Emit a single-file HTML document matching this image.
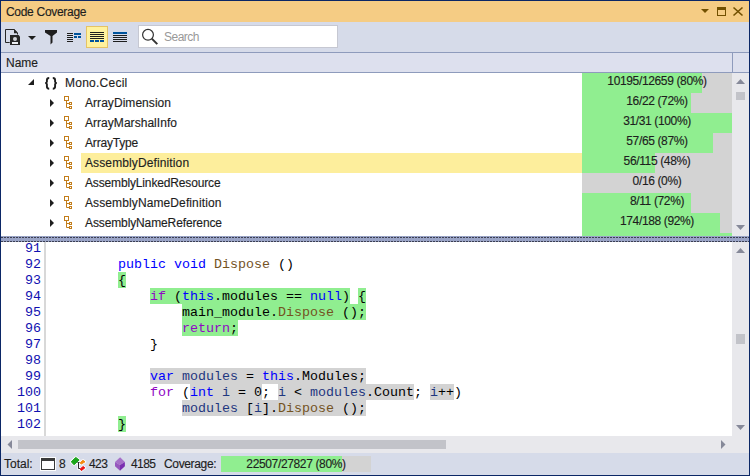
<!DOCTYPE html><html><head><meta charset="utf-8"><style>
*{margin:0;padding:0;box-sizing:border-box}
html,body{width:750px;height:476px;overflow:hidden;background:#fff}
body{position:relative;font-family:"Liberation Sans",sans-serif;font-size:12px;color:#1e1e1e}
div,span.t{position:absolute}
.t{white-space:pre;line-height:14px;height:14px;-webkit-text-stroke:0.15px currentColor}
.bar{background:#d3d3d3}
.grn{background:#90ee90}
.code{font-family:"Liberation Mono",monospace;font-size:13.333px;white-space:pre;line-height:16px;height:16px;color:#000}
.g{background:#90ee90}
.y{background:#d3d3d3}
.kw{color:#0000ff}
.ck{color:#8f08c4}
.mt{color:#74531f}
.lv{color:#1f377f}
svg{position:absolute;left:0;top:0}
</style></head><body><div style="left:0px;top:0px;width:750px;height:476px;background:#fff;"></div>
<div style="left:1px;top:1px;width:748px;height:21px;background:#f5cc84;"></div>
<div style="left:1px;top:22px;width:748px;height:30px;background:#d6dbe9;"></div>
<div style="left:1px;top:52px;width:748px;height:1px;background:#8e9bbc;"></div>
<div style="left:1px;top:53px;width:748px;height:19px;background:#dde0ee;"></div>
<div style="left:1px;top:72px;width:748px;height:1px;background:#8e9bbc;"></div>
<div style="left:732px;top:53px;width:1px;height:19px;background:#8e9bbc;"></div>
<div class="t" style="left:6px;top:5px;color:#1e1e1e;letter-spacing:-0.3px">Code Coverage</div>
<div class="t" style="left:6px;top:56px;color:#1e1e1e">Name</div>
<div style="left:138px;top:25px;width:200px;height:23px;background:#fff;border:1px solid #c6c8d2"></div>
<div class="t" style="left:164px;top:30px;color:#999;letter-spacing:-0.5px;-webkit-text-stroke:0">Search</div>
<div style="left:582px;top:73px;width:150px;height:20px;background:#d3d3d3;"></div>
<div style="left:582px;top:73px;width:120px;height:20px;background:#90ee90;"></div>
<div class="t" style="left:582px;top:74px;width:150px;text-align:center;color:#1e1e1e;letter-spacing:-0.36px">10195/12659 (80%)</div>
<div class="t" style="left:65px;top:76px;color:#1e1e1e;letter-spacing:0.25px">Mono.Cecil</div>
<div style="left:582px;top:93px;width:150px;height:20px;background:#d3d3d3;"></div>
<div style="left:582px;top:93px;width:109px;height:20px;background:#90ee90;"></div>
<div class="t" style="left:582px;top:94px;width:150px;text-align:center;color:#1e1e1e;letter-spacing:-0.36px">16/22 (72%)</div>
<div class="t" style="left:85px;top:96px;color:#1e1e1e;letter-spacing:0.05px">ArrayDimension</div>
<div style="left:582px;top:113px;width:150px;height:20px;background:#d3d3d3;"></div>
<div style="left:582px;top:113px;width:150px;height:20px;background:#90ee90;"></div>
<div class="t" style="left:582px;top:114px;width:150px;text-align:center;color:#1e1e1e;letter-spacing:-0.36px">31/31 (100%)</div>
<div class="t" style="left:85px;top:116px;color:#1e1e1e;letter-spacing:0.04px">ArrayMarshalInfo</div>
<div style="left:582px;top:133px;width:150px;height:20px;background:#d3d3d3;"></div>
<div style="left:582px;top:133px;width:131px;height:20px;background:#90ee90;"></div>
<div class="t" style="left:582px;top:134px;width:150px;text-align:center;color:#1e1e1e;letter-spacing:-0.36px">57/65 (87%)</div>
<div class="t" style="left:85px;top:136px;color:#1e1e1e;letter-spacing:-0.18px">ArrayType</div>
<div style="left:81px;top:153px;width:501px;height:20px;background:#fdee9c;"></div>
<div style="left:582px;top:153px;width:150px;height:20px;background:#d3d3d3;"></div>
<div style="left:582px;top:153px;width:73px;height:20px;background:#90ee90;"></div>
<div class="t" style="left:582px;top:154px;width:150px;text-align:center;color:#1e1e1e;letter-spacing:-0.36px">56/115 (48%)</div>
<div class="t" style="left:85px;top:156px;color:#1e1e1e;letter-spacing:0.12px">AssemblyDefinition</div>
<div style="left:582px;top:173px;width:150px;height:20px;background:#d3d3d3;"></div>
<div class="t" style="left:582px;top:174px;width:150px;text-align:center;color:#1e1e1e;letter-spacing:-0.36px">0/16 (0%)</div>
<div class="t" style="left:85px;top:176px;color:#1e1e1e;letter-spacing:-0.15px">AssemblyLinkedResource</div>
<div style="left:582px;top:193px;width:150px;height:20px;background:#d3d3d3;"></div>
<div style="left:582px;top:193px;width:109px;height:20px;background:#90ee90;"></div>
<div class="t" style="left:582px;top:194px;width:150px;text-align:center;color:#1e1e1e;letter-spacing:-0.36px">8/11 (72%)</div>
<div class="t" style="left:85px;top:196px;color:#1e1e1e;letter-spacing:0.11px">AssemblyNameDefinition</div>
<div style="left:582px;top:213px;width:150px;height:20px;background:#d3d3d3;"></div>
<div style="left:582px;top:213px;width:138px;height:20px;background:#90ee90;"></div>
<div class="t" style="left:582px;top:214px;width:150px;text-align:center;color:#1e1e1e;letter-spacing:-0.36px">174/188 (92%)</div>
<div class="t" style="left:85px;top:216px;color:#1e1e1e;letter-spacing:-0.12px">AssemblyNameReference</div>
<div style="left:582px;top:233px;width:150px;height:3px;background:#d3d3d3;"></div>
<div style="left:582px;top:233px;width:150px;height:3px;background:#90ee90;"></div>
<div style="left:732px;top:73px;width:17px;height:163px;background:#e8e8ec;"></div>
<div style="left:1px;top:236px;width:748px;height:6px;background:#99a3c5;"></div>
<div style="left:732px;top:242px;width:17px;height:211px;background:#e8e8ec;"></div>
<div style="left:1px;top:436px;width:731px;height:17px;background:#e8e8ec;"></div>
<div style="left:18px;top:440px;width:428px;height:9px;background:#c2c3c9;"></div>
<div style="left:736px;top:334px;width:9px;height:10px;background:#c2c3c9;"></div>
<div style="left:736px;top:92px;width:9px;height:8px;background:#c2c3c9;"></div>
<div style="left:44px;top:242px;width:2px;height:194px;background:#d8d8d8;"></div>
<div style="left:1px;top:453px;width:748px;height:22px;background:#d6dbe9;"></div>
<div class="t" style="left:4px;top:457px;color:#1e1e1e">Total:</div>
<div class="t" style="left:59px;top:457px;color:#1e1e1e">8</div>
<div class="t" style="left:89px;top:457px;color:#1e1e1e;letter-spacing:-0.6px">423</div>
<div class="t" style="left:131px;top:457px;color:#1e1e1e;letter-spacing:-0.6px">4185</div>
<div class="t" style="left:164px;top:457px;color:#1e1e1e;letter-spacing:-0.35px">Coverage:</div>
<div style="left:221px;top:456px;width:150px;height:16px;background:#d3d3d3;"></div>
<div style="left:221px;top:456px;width:121px;height:16px;background:#90ee90;"></div>
<div class="t" style="left:221px;top:457px;width:150px;text-align:center;color:#1e1e1e;letter-spacing:-0.36px">22507/27827 (80%)</div>
<div style="left:118px;top:272px;width:8px;height:16px;background:#90ee90;"></div>
<div style="left:150px;top:288px;width:200px;height:16px;background:#90ee90;"></div>
<div style="left:358px;top:288px;width:8px;height:16px;background:#90ee90;"></div>
<div style="left:182px;top:304px;width:184px;height:16px;background:#90ee90;"></div>
<div style="left:182px;top:320px;width:56px;height:16px;background:#90ee90;"></div>
<div style="left:150px;top:368px;width:216px;height:16px;background:#d3d3d3;"></div>
<div style="left:190px;top:384px;width:72px;height:16px;background:#d3d3d3;"></div>
<div style="left:278px;top:384px;width:136px;height:16px;background:#d3d3d3;"></div>
<div style="left:430px;top:384px;width:24px;height:16px;background:#d3d3d3;"></div>
<div style="left:182px;top:400px;width:184px;height:16px;background:#d3d3d3;"></div>
<div style="left:118px;top:416px;width:8px;height:16px;background:#90ee90;"></div>
<div class="code" style="left:17px;top:241px;width:24px;text-align:right;color:#1010b0">91</div>
<div class="code" style="left:17px;top:257px;width:24px;text-align:right;color:#1010b0">92</div>
<div class="code" style="left:17px;top:273px;width:24px;text-align:right;color:#1010b0">93</div>
<div class="code" style="left:17px;top:289px;width:24px;text-align:right;color:#1010b0">94</div>
<div class="code" style="left:17px;top:305px;width:24px;text-align:right;color:#1010b0">95</div>
<div class="code" style="left:17px;top:321px;width:24px;text-align:right;color:#1010b0">96</div>
<div class="code" style="left:17px;top:337px;width:24px;text-align:right;color:#1010b0">97</div>
<div class="code" style="left:17px;top:353px;width:24px;text-align:right;color:#1010b0">98</div>
<div class="code" style="left:17px;top:369px;width:24px;text-align:right;color:#1010b0">99</div>
<div class="code" style="left:17px;top:385px;width:24px;text-align:right;color:#1010b0">100</div>
<div class="code" style="left:17px;top:401px;width:24px;text-align:right;color:#1010b0">101</div>
<div class="code" style="left:17px;top:417px;width:24px;text-align:right;color:#1010b0">102</div>
<div class="code" style="left:118px;top:257px"><span class="kw">public</span> <span class="kw">void</span> <span class="mt">Dispose</span> ()</div>
<div class="code" style="left:118px;top:273px">{</div>
<div class="code" style="left:150px;top:289px"><span class="ck">if</span> (<span class="kw">this</span>.modules == <span class="kw">null</span>) {</div>
<div class="code" style="left:182px;top:305px">main_module.<span class="mt">Dispose</span> ();</div>
<div class="code" style="left:182px;top:321px"><span class="ck">return</span>;</div>
<div class="code" style="left:150px;top:337px">}</div>
<div class="code" style="left:150px;top:369px"><span class="kw">var</span> <span class="lv">modules</span> = <span class="kw">this</span>.Modules;</div>
<div class="code" style="left:150px;top:385px"><span class="ck">for</span> (<span class="kw">int</span> <span class="lv">i</span> = 0; <span class="lv">i</span> &lt; <span class="lv">modules</span>.Count; <span class="lv">i</span>++)</div>
<div class="code" style="left:182px;top:401px"><span class="lv">modules</span> [<span class="lv">i</span>].<span class="mt">Dispose</span> ();</div>
<div class="code" style="left:118px;top:417px">}</div>
<svg width="750" height="476" viewBox="0 0 750 476"><polygon points="701,9 709,9 705,13" fill="#725000"/><rect x="717.5" y="7.5" width="8" height="8" fill="none" stroke="#725000"/><rect x="717" y="7" width="9" height="3" fill="#725000"/><path d="M733.5,7.5 L742.5,15.5 M742.5,7.5 L733.5,15.5" stroke="#725000" stroke-width="1.6"/><polygon points="34,79 34,85 28,85" fill="#1e1e1e"/><polygon points="50,99 54,103 50,107" fill="#1e1e1e"/><rect x="64.5" y="96.5" width="4" height="4" fill="none" stroke="#c27d1a"/><path d="M66.5,101 V107.5 H69 M66.5,103.5 H69" fill="none" stroke="#c27d1a"/><rect x="69.5" y="102.5" width="2" height="2" fill="none" stroke="#c27d1a"/><rect x="69.5" y="106.5" width="2" height="2" fill="none" stroke="#c27d1a"/><polygon points="50,119 54,123 50,127" fill="#1e1e1e"/><rect x="64.5" y="116.5" width="4" height="4" fill="none" stroke="#c27d1a"/><path d="M66.5,121 V127.5 H69 M66.5,123.5 H69" fill="none" stroke="#c27d1a"/><rect x="69.5" y="122.5" width="2" height="2" fill="none" stroke="#c27d1a"/><rect x="69.5" y="126.5" width="2" height="2" fill="none" stroke="#c27d1a"/><polygon points="50,139 54,143 50,147" fill="#1e1e1e"/><rect x="64.5" y="136.5" width="4" height="4" fill="none" stroke="#c27d1a"/><path d="M66.5,141 V147.5 H69 M66.5,143.5 H69" fill="none" stroke="#c27d1a"/><rect x="69.5" y="142.5" width="2" height="2" fill="none" stroke="#c27d1a"/><rect x="69.5" y="146.5" width="2" height="2" fill="none" stroke="#c27d1a"/><polygon points="50,159 54,163 50,167" fill="#1e1e1e"/><rect x="64.5" y="156.5" width="4" height="4" fill="none" stroke="#c27d1a"/><path d="M66.5,161 V167.5 H69 M66.5,163.5 H69" fill="none" stroke="#c27d1a"/><rect x="69.5" y="162.5" width="2" height="2" fill="none" stroke="#c27d1a"/><rect x="69.5" y="166.5" width="2" height="2" fill="none" stroke="#c27d1a"/><polygon points="50,179 54,183 50,187" fill="#1e1e1e"/><rect x="64.5" y="176.5" width="4" height="4" fill="none" stroke="#c27d1a"/><path d="M66.5,181 V187.5 H69 M66.5,183.5 H69" fill="none" stroke="#c27d1a"/><rect x="69.5" y="182.5" width="2" height="2" fill="none" stroke="#c27d1a"/><rect x="69.5" y="186.5" width="2" height="2" fill="none" stroke="#c27d1a"/><polygon points="50,199 54,203 50,207" fill="#1e1e1e"/><rect x="64.5" y="196.5" width="4" height="4" fill="none" stroke="#c27d1a"/><path d="M66.5,201 V207.5 H69 M66.5,203.5 H69" fill="none" stroke="#c27d1a"/><rect x="69.5" y="202.5" width="2" height="2" fill="none" stroke="#c27d1a"/><rect x="69.5" y="206.5" width="2" height="2" fill="none" stroke="#c27d1a"/><polygon points="50,219 54,223 50,227" fill="#1e1e1e"/><rect x="64.5" y="216.5" width="4" height="4" fill="none" stroke="#c27d1a"/><path d="M66.5,221 V227.5 H69 M66.5,223.5 H69" fill="none" stroke="#c27d1a"/><rect x="69.5" y="222.5" width="2" height="2" fill="none" stroke="#c27d1a"/><rect x="69.5" y="226.5" width="2" height="2" fill="none" stroke="#c27d1a"/><path d="M49.2,78 C47.6,78 46.9,78.6 46.9,80.2 V81.8 C46.9,82.6 46.4,83 45.2,83 C46.4,83 46.9,83.4 46.9,84.2 V86.6 C46.9,88.2 47.6,88.8 49.2,88.8" fill="none" stroke="#1e1e1e" stroke-width="1.9"/><path d="M52.8,78 C54.4,78 55.1,78.6 55.1,80.2 V81.8 C55.1,82.6 55.6,83 56.8,83 C55.6,83 55.1,83.4 55.1,84.2 V86.6 C55.1,88.2 54.4,88.8 52.8,88.8" fill="none" stroke="#1e1e1e" stroke-width="1.9"/><path d="M10,42.5 H5.5 V29.5 H14.2 L17.5,32.8 V35" fill="none" stroke="#262626"/><path d="M14,29 V33.3 H18 Z" fill="#262626"/><rect x="9.5" y="34.2" width="11" height="11" fill="#d6dbe9" opacity="0.6"/><path d="M10,35 H18.6 L20,36.4 V45 H10 Z" fill="#262626"/><circle cx="15" cy="39" r="2" fill="#d2d4da"/><rect x="12" y="42" width="6" height="2" fill="#eef0f4"/><polygon points="28,36 36,36 32,40" fill="#1e1e1e"/><path d="M45,30 H57 V32.5 L52.5,36 V42.5 L50.5,44.5 V36 L45,32.5 Z" fill="#1e1e1e"/><rect x="67" y="33" width="6" height="1" fill="#1e1e1e"/><rect x="67" y="35" width="6" height="1" fill="#1e1e1e"/><rect x="67" y="37" width="6" height="1" fill="#1e1e1e"/><rect x="67" y="39" width="6" height="1" fill="#1e1e1e"/><rect x="67" y="41" width="6" height="1" fill="#1e1e1e"/><rect x="74" y="33" width="7" height="2" fill="#00539c"/><rect x="74" y="36" width="3" height="2" fill="#00539c"/><rect x="78" y="36" width="3" height="2" fill="#00539c"/><rect x="86.5" y="26.5" width="21" height="21" fill="#fff29d" stroke="#e5c365"/><rect x="90" y="32" width="14" height="1" fill="#1e1e1e"/><rect x="90" y="34" width="14" height="1" fill="#1e1e1e"/><rect x="90" y="36" width="14" height="1" fill="#1e1e1e"/><rect x="90" y="38" width="14" height="1" fill="#1e1e1e"/><rect x="90" y="40" width="4" height="2" fill="#00539c"/><rect x="95" y="40" width="4" height="2" fill="#00539c"/><rect x="100" y="40" width="4" height="2" fill="#00539c"/><rect x="113" y="32" width="14" height="2" fill="#00539c"/><rect x="113" y="35" width="14" height="1" fill="#1e1e1e"/><rect x="113" y="37" width="14" height="1" fill="#1e1e1e"/><rect x="113" y="39" width="14" height="1" fill="#1e1e1e"/><rect x="113" y="41" width="14" height="1" fill="#1e1e1e"/><circle cx="148" cy="34.8" r="5.4" fill="none" stroke="#333" stroke-width="1.2"/><path d="M151.8,38.6 L157.3,44.1" stroke="#333" stroke-width="2"/><polygon points="736,84 745,84 740.5,79" fill="#868999"/><polygon points="736,225 745,225 740.5,230" fill="#868999"/><polygon points="736,253 745,253 740.5,248" fill="#868999"/><polygon points="736,425 745,425 740.5,430" fill="#868999"/><polygon points="12,440 12,449 7.5,444.5" fill="#868999"/><polygon points="721,440 721,449 725.5,444.5" fill="#868999"/><path d="M1,237.5 H749 M1,241.5 H749" stroke="#3c3f52" stroke-dasharray="2 1"/><rect x="40.5" y="457.5" width="15" height="13" fill="#fff" stroke="#fff" stroke-opacity="0.85"/><rect x="41.5" y="458.5" width="13" height="11" fill="#fff" stroke="#3a3a3a"/><rect x="41" y="458" width="14" height="3" fill="#3a3a3a"/><polygon points="75.8,457.4 79.1,460.0 74.1,464.7 71.2,461.8" fill="#fff" stroke="#fff" stroke-width="2.6" stroke-linejoin="round" opacity="0.8"/><polygon points="82.9,460.3 85,461.8 81.2,464.1 80.2,462.8" fill="#fff" stroke="#fff" stroke-width="2.6" stroke-linejoin="round" opacity="0.8"/><polygon points="83.3,466.4 84.8,467.9 81.4,470.6 80.2,468.9" fill="#fff" stroke="#fff" stroke-width="2.6" stroke-linejoin="round" opacity="0.8"/><path d="M77.5,462.5 H79.5 M78.5,462.5 V468.5 H80" fill="none" stroke="#fff" stroke-width="2.5" opacity="0.8"/><path d="M77.5,462.5 H79.5 M78.5,462.5 V468.5 H80" fill="none" stroke="#2d2d30" stroke-width="1"/><polygon points="75.8,457.4 79.1,460.0 74.1,464.7 71.2,461.8" fill="#1ba51b" stroke="#1ba51b" stroke-width="1" stroke-linejoin="round"/><polygon points="82.9,460.3 85,461.8 81.2,464.1 80.2,462.8" fill="#f48a10" stroke="#f48a10" stroke-width="1" stroke-linejoin="round"/><polygon points="83.3,466.4 84.8,467.9 81.4,470.6 80.2,468.9" fill="#ee1111" stroke="#ee1111" stroke-width="1" stroke-linejoin="round"/><polygon points="120.1,457.2 124.9,462 120,465.1 115,462" fill="#a670c8"/><polygon points="115,462 120,465.1 120,470.8 115,466.2" fill="#9657be"/><polygon points="120,465.1 124.9,462 124.9,466.2 120,470.8" fill="#7a2fb0"/><rect x="0.5" y="0.5" width="749" height="475" fill="none" stroke="#0b2766"/></svg></body></html>
